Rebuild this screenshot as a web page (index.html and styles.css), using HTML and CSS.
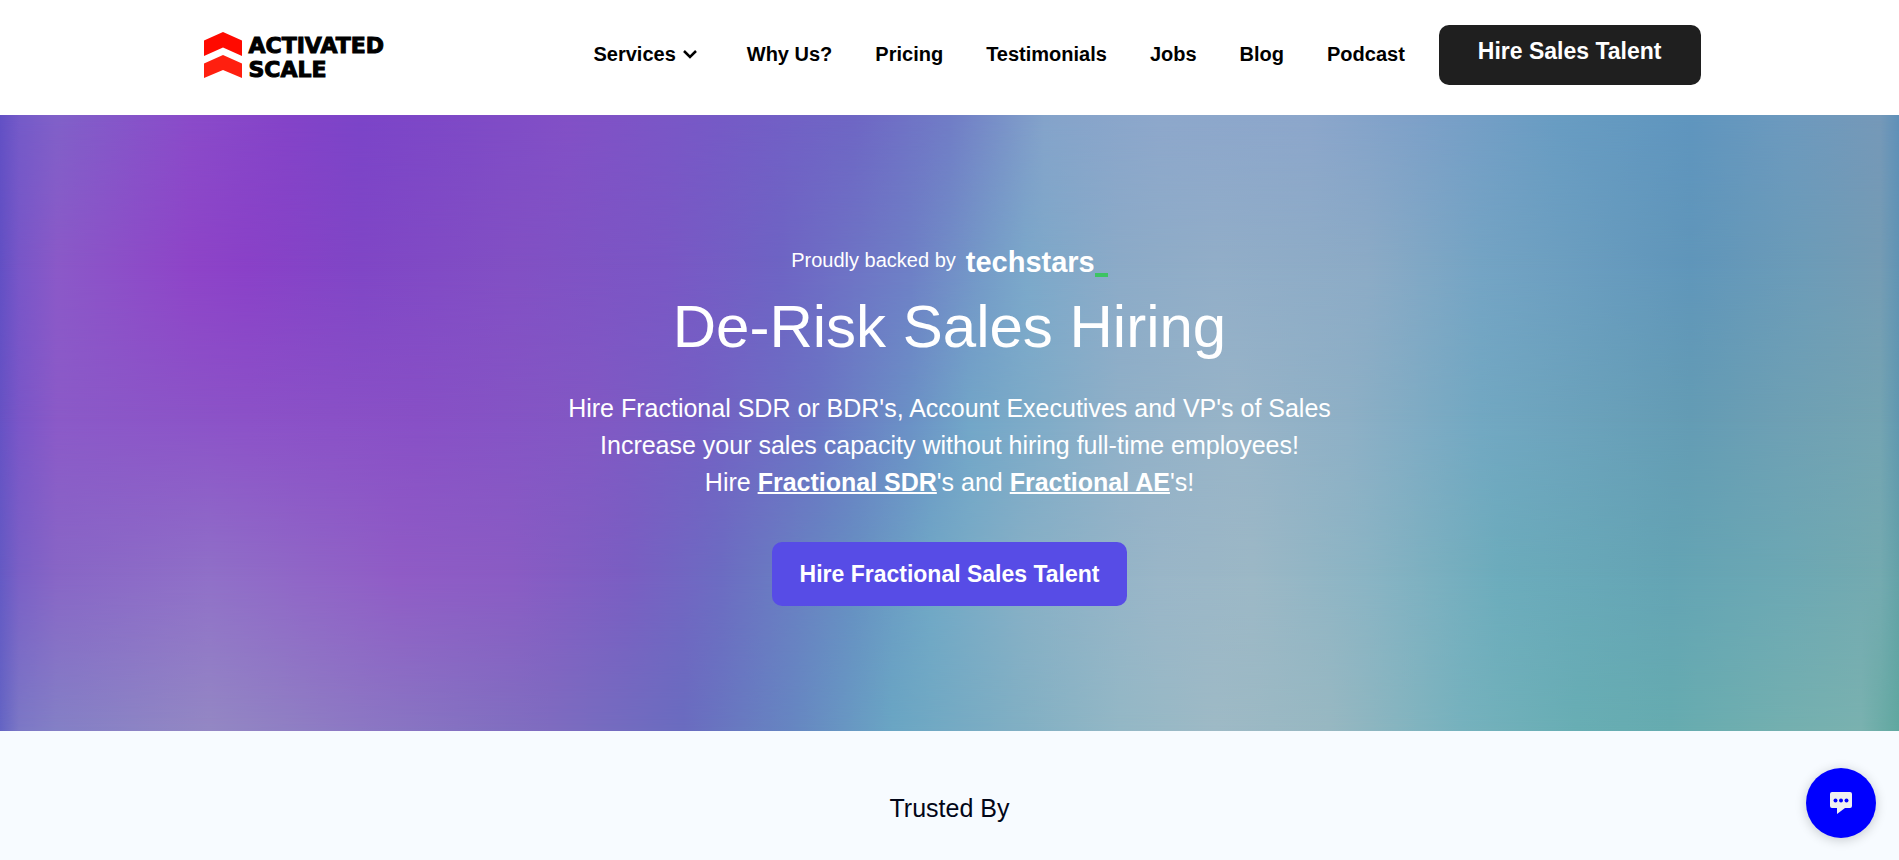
FILE: index.html
```html
<!DOCTYPE html>
<html lang="en">
<head>
    <meta charset="UTF-8">
    <meta name="viewport" content="width=device-width, initial-scale=1.0">
    <title>Activated Scale - De-Risk Sales Hiring</title>
    <link rel="stylesheet" href="styles.css">
</head>
<body>

<header class="header">
    <div class="container header-area">
        <a class="logo" href="#">
            <svg class="logo-mark" viewBox="0 0 40 48" aria-hidden="true">
                <path d="M1 9.500 20 1l19 8.500V25L20 16.500 1 25z" fill="#ff0a00"/>
                <path d="M1 32.500 20 24l19 8.500V47L20 39 1 47z" fill="#ff1f0f"/>
            </svg>
            <span class="logo-text">ACTIVATED<br>SCALE</span>
        </a>
        <nav class="nav">
            <button class="nav-link nav-dropdown" type="button">Services
                <svg class="chevron" viewBox="0 0 16 10" aria-hidden="true"><path d="M2 2l6 6 6-6" fill="none" stroke="currentColor" stroke-width="2.500"/></svg>
            </button>
            <a class="nav-link" href="#">Why Us?</a>
            <a class="nav-link" href="#">Pricing</a>
            <a class="nav-link" href="#">Testimonials</a>
            <a class="nav-link" href="#">Jobs</a>
            <a class="nav-link" href="#">Blog</a>
            <a class="nav-link" href="#">Podcast</a>
        </nav>
        <a class="btn btn-dark" href="#">Hire Sales Talent</a>
    </div>
</header>

<section class="hero">
    <!-- Color layers, each one fades into the one below it -->
    <div class="mesh mesh-4"></div>
    <div class="mesh mesh-3"></div>
    <div class="mesh mesh-2"></div>
    <div class="mesh mesh-1"></div>

    <div class="hero-content">
        <div class="backed">
            <span>Proudly backed by</span>
            <span class="techstars">techstars</span>
        </div>
        <h1>De-Risk Sales Hiring</h1>
        <p>Hire Fractional SDR or BDR's, Account Executives and VP's of Sales<br>
            Increase your sales capacity without hiring full-time employees!<br>
            Hire <a href="#">Fractional SDR</a>'s and <a href="#">Fractional AE</a>'s!</p>
        <a class="btn btn-primary" href="#">Hire Fractional Sales Talent</a>
    </div>
</section>

<section class="trusted">
    <h2>Trusted By</h2>
</section>

<button class="chat" type="button" aria-label="Open chat">
    <svg viewBox="0 0 24 24" aria-hidden="true">
        <path d="M3 1h18a2 2 0 0 1 2 2v12a2 2 0 0 1-2 2h-5l-8 6v-6H3a2 2 0 0 1-2-2V3a2 2 0 0 1 2-2z" fill="#f0f0f0"/>
        <circle cx="6.500" cy="9.500" r="2" fill="#0000ff"/>
        <circle cx="12" cy="9.500" r="2" fill="#0000ff"/>
        <circle cx="17.500" cy="9.500" r="2" fill="#0000ff"/>
    </svg>
</button>

</body>
</html>
```
FILE: styles.css
```css
* {
    box-sizing: border-box;
}
body {
    margin: 0;
    font-family: "Liberation Sans", Arial, sans-serif;
    background-color: #f7fbff;
    color: #000;
}
a {
    color: inherit;
    text-decoration: none;
}
.container {
    max-width: 1502px;
    margin: 0 auto;
}

/* Header */
.header {
    background-color: #fff;
    padding: 25px 0 30px;
}
.header-area {
    display: flex;
    align-items: center;
}
.logo {
    display: flex;
    align-items: center;
    gap: 6px;
    padding-left: 4px;
    margin-right: auto;
}
.logo-mark {
    width: 40px;
    height: 48px;
}
.logo-text {
    padding-top: 6px;
    font-family: "DejaVu Sans", sans-serif;
    font-size: 22px;
    line-height: 24px;
    font-weight: bold;
    -webkit-text-stroke: 1px #000;
}
.nav {
    display: flex;
    align-items: center;
    gap: 43px;
    margin-right: 34px;
    padding-bottom: 2px;
}
.nav-link {
    display: flex;
    align-items: center;
    gap: 6px;
    padding: 0;
    border: none;
    background: none;
    font-family: inherit;
    font-size: 20px;
    line-height: 24px;
    font-weight: bold;
    color: #000;
    cursor: pointer;
}
.nav-dropdown {
    padding-right: 6px;
}
.chevron {
    width: 16px;
    height: 10px;
}
.btn {
    display: inline-block;
    border-radius: 10px;
    font-size: 23px;
    font-weight: bold;
    color: #fff;
}
.btn-dark {
    padding: 12px 39px 20px;
    line-height: 28px;
    background-color: #1f1f1f;
}
.btn-primary {
    padding: 16px 28px;
    line-height: 32px;
    background-color: #574ce6;
}

/* Hero */
.hero {
    position: relative;
    padding: 128px 20px 125px;
    text-align: center;
    color: #fff;
    background: linear-gradient(90deg, #6464c4 0%, #7c78c6 1%, #8480c6 3%, #9488c4 11%, #8c78c4 19%, #7e6cc0 29%, #6a6cc0 36%, #6688c2 42%, #6aa6c4 47%, #82b0c4 54%, #94b8c6 59%, #9ebac6 64%, #98b8c2 70%, #76b2be 77%, #68aeb4 83%, #66acb0 88%, #74b0b0 94%, #7ab2b0 98%, #60a8a0 100%);
}
.mesh {
    position: absolute;
    inset: 0;
}
.mesh-1 {
    background: linear-gradient(90deg, #6250c4 0%, #745ac8 1%, #8060c8 3%, #8a4bc9 10%, #8443c8 15%, #7b44c8 19%, #7e4ac6 25%, #8250c6 30%, #755ac6 38%, #6e66c4 45%, #707cc6 50%, #7a93c8 53%, #84a3ca 55%, #8da7cb 61%, #8ca6cb 69%, #7ca0c8 75%, #689cc2 82%, #5f95be 89%, #6c99be 94%, #7598b8 99%, #5e90b8 100%);
    mask-image: linear-gradient(#000 0%, transparent 25%);
}
.mesh-2 {
    background: linear-gradient(90deg, #6250c4 0%, #7856c8 1%, #8b59c8 3%, #8e44c8 10%, #8a41c8 13%, #8046c6 19%, #8250c4 27%, #7a57c5 35%, #6e64c4 41%, #6e80c6 48%, #759cc8 52%, #7ba8ca 54%, #8cabc8 59%, #92aec8 64%, #8cabc6 72%, #74a4c4 78%, #6096ba 89%, #6c9cb8 95%, #759cb4 99%, #6094b4 100%);
    mask-image: linear-gradient(#000 25%, transparent 50%);
}
.mesh-3 {
    background: linear-gradient(90deg, #6652c4 0%, #7a56c8 1%, #8b5ac8 3%, #8c52c8 13%, #8850c6 22%, #8258c4 31%, #7460c4 37%, #6a74c4 43%, #6b92c6 48%, #72a6c8 51%, #80acc8 55%, #90b0c8 59%, #98b4c8 65%, #8eb0c6 71%, #72a8c2 78%, #649cb4 89%, #6ea0b4 94%, #74a4b2 99%, #6098b0 100%);
    mask-image: linear-gradient(#000 50%, transparent 75%);
}
.mesh-4 {
    background: linear-gradient(90deg, #645ac4 0%, #7a60c6 1%, #8866c6 3%, #9070c8 11%, #905cc6 21%, #8a5cc4 27%, #7a5ec2 33%, #6c6cc2 38%, #6690c2 45%, #70a8c6 49%, #88b0c6 54%, #9ab6c8 61%, #9cb8c6 66%, #8ab4c4 72%, #6cacbc 79%, #64a4b4 88%, #6ca8b4 94%, #74aab0 99%, #64a2a8 100%);
    mask-image: linear-gradient(#000 75%, transparent 100%);
}
.hero-content {
    position: relative;
}
.backed {
    display: flex;
    justify-content: center;
    align-items: center;
    gap: 10px;
    font-size: 20px;
    line-height: 34px;
}
.techstars {
    display: flex;
    align-items: flex-end;
    padding-top: 4px;
    font-size: 29px;
    line-height: 30px;
    font-weight: bold;
}
.techstars::after {
    content: "";
    width: 13px;
    height: 4px;
    background-color: #3cc463;
}
.hero h1 {
    margin: 14px 0 27px;
    font-size: 60px;
    line-height: 72px;
    font-weight: normal;
}
.hero p {
    margin: 0 0 41px;
    font-size: 25px;
    line-height: 37px;
}
.hero p a {
    font-weight: bold;
    text-decoration: underline;
    text-decoration-thickness: 2px;
}

/* Trusted by */
.trusted {
    padding: 59px 20px;
    text-align: center;
}
.trusted h2 {
    margin: 0;
    font-size: 25px;
    line-height: 36px;
    font-weight: normal;
    color: #020617;
}

.chat {
    position: fixed;
    right: 23px;
    bottom: 22px;
    display: flex;
    align-items: center;
    justify-content: center;
    width: 70px;
    height: 70px;
    padding: 0;
    border: none;
    border-radius: 50%;
    background-color: #0000ff;
    box-shadow: 0 2px 12px rgba(0, 0, 0, 0.2);
    cursor: pointer;
}
.chat svg {
    width: 24px;
    height: 24px;
}
```
